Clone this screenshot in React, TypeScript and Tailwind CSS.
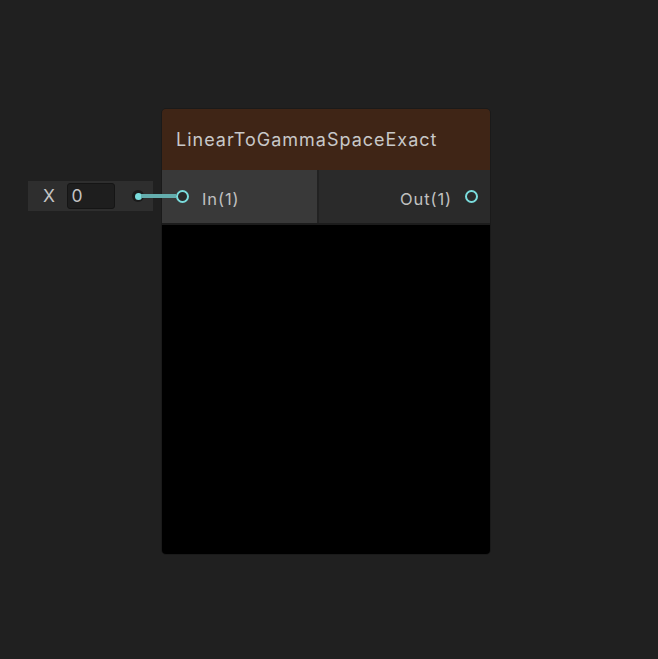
export default function App() {
  return (
    <div
      className="relative w-[658px] h-[659px] bg-[#202020] overflow-hidden"
      style={{ fontFamily: "Inter, 'Noto Sans', sans-serif" }}
    >
      {/* Inline input field for the X port */}
      <div className="absolute left-[28px] top-[181px] flex items-center w-[125px] h-[30px] bg-[#2e2e2e]">
        <span className="ml-[15px] text-[17.5px] leading-none text-[#c4c4c4] tracking-[0.5px]">X</span>
        <div className="ml-[12px] w-[48px] h-[26px] flex items-center px-[3px] bg-[#1e1e1e] border border-[#151515] rounded-[3px] text-[17.5px] text-[#c4c4c4]">
          0
        </div>
        <div className="ml-[17px] w-[12px] h-[12px] rounded-full bg-[#1b1b1b] flex items-center justify-center">
          <div className="w-[7px] h-[7px] rounded-full bg-[#7adcdc]" />
        </div>
      </div>

      {/* Node */}
      <div className="absolute left-[161px] top-[108px] w-[330px] flex flex-col border border-[#1a1a1a] rounded-[5px] overflow-hidden">
        <div className="h-[61px] bg-[#3f2516] flex items-center px-[14px]">
          <span className="text-[18px] text-[#c8c8c8] tracking-[1px]">LinearToGammaSpaceExact</span>
        </div>
        <div className="h-[55px] flex border-b-2 border-[#1c1c1c]">
          <div className="w-[157px] bg-[#393939] border-r-2 border-[#222] flex items-center pl-[14px]">
            <div className="relative z-10 w-[13px] h-[13px] rounded-full border-2 border-[#7adcdc] bg-[#2a2a2a]" />
            <span className="ml-[13px] text-[16.5px] text-[#c0c0c0] tracking-[0.9px] pt-[6px]">In(1)</span>
          </div>
          <div className="flex-1 bg-[#2a2a2a] flex items-center justify-end pr-[12px]">
            <span className="mr-[13px] text-[16.5px] text-[#c0c0c0] tracking-[0.9px] pt-[6px]">Out(1)</span>
            <div className="w-[13px] h-[13px] rounded-full border-2 border-[#7adcdc]" />
          </div>
        </div>
        <div className="h-[329px] bg-black" />
      </div>

      {/* Edge from field to port */}
      <div className="absolute left-[141px] top-[194px] w-[35px] h-[4px] bg-[#64adad]" />
    </div>
  );
}
